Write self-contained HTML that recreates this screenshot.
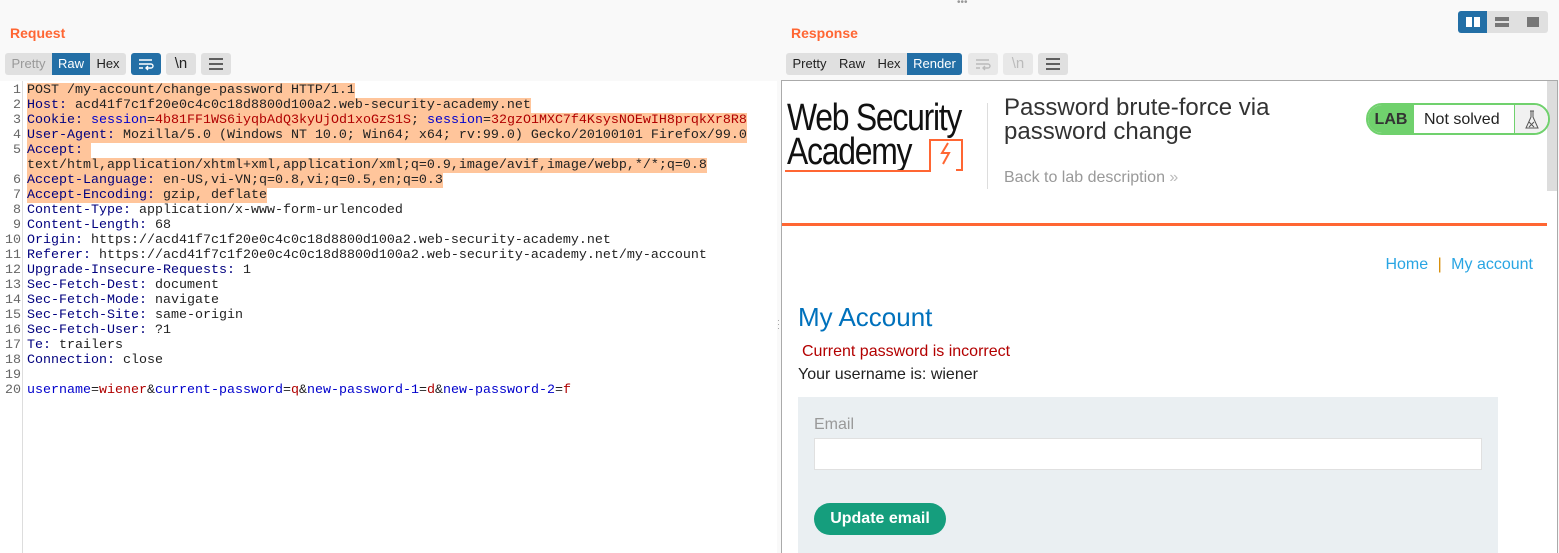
<!DOCTYPE html>
<html><head><meta charset="utf-8"><style>
*{margin:0;padding:0;box-sizing:border-box}
body{width:1559px;height:553px;background:#f9f9f9;position:relative;overflow:hidden;font-family:"Liberation Sans",sans-serif}
.a{position:absolute}
.title{color:#ff6633;font-weight:bold;font-size:14px}
.btn{position:absolute;height:22px;font-size:13px;line-height:22px;text-align:center;color:#222;background:#e0e0e0}
.code{position:absolute;left:0;top:81px;width:777px;height:472px;background:#fff}
.gut{position:absolute;left:0;top:0;width:23px;height:472px;border-right:1px solid #ddd;background:#fff}
.ln{position:absolute;left:0;width:21px;text-align:right;font:13.33px/15px "Liberation Mono",monospace;color:#666}
.l{position:absolute;left:27px;font:13.33px/15px "Liberation Mono",monospace;color:#222;white-space:pre}
.h{background:#ffc59b}
.k{color:#00007f}.r{color:#b00000}.b{color:#0000cc}
.logo{position:absolute;left:5px;font-size:38px;line-height:38px;letter-spacing:-1.5px;color:#111;transform-origin:0 0;white-space:nowrap}
</style></head><body>
<div class="a" style="left:957px;top:0;font-size:10px;color:#999;line-height:6px">•••</div>
<div class="a title" style="left:10px;top:25px">Request</div>
<div class="btn" style="left:5px;top:53px;width:47px;color:#999;border-radius:3px 0 0 3px">Pretty</div>
<div class="btn" style="left:52px;top:53px;width:38px;background:#236fa6;color:#fff">Raw</div>
<div class="btn" style="left:90px;top:53px;width:36px;border-radius:0 3px 3px 0">Hex</div>
<div class="btn" style="left:131px;top:53px;width:30px;background:#236fa6;border-radius:3px"><svg width="18" height="14" viewBox="0 0 18 14" style="margin-top:4px"><path d="M2 3h13M2 7h12a2 2 0 0 1 0 4H9M11 9l-2 2 2 2M2 11h4" stroke="#fff" stroke-width="1.4" fill="none"/></svg></div>
<div class="btn" style="left:166px;top:53px;width:30px;border-radius:3px;font-size:15px">\n</div>
<div class="btn" style="left:201px;top:53px;width:30px;border-radius:3px"><svg width="16" height="12" viewBox="0 0 16 12" style="margin-top:5px"><path d="M1 1h14M1 6h14M1 11h14" stroke="#333" stroke-width="1.4"/></svg></div>
<div class="code">
<div class="gut"></div>
<div class="ln" style="top:2px">1</div><div class="ln" style="top:17px">2</div><div class="ln" style="top:32px">3</div><div class="ln" style="top:47px">4</div><div class="ln" style="top:62px">5</div><div class="ln" style="top:92px">6</div><div class="ln" style="top:107px">7</div><div class="ln" style="top:122px">8</div><div class="ln" style="top:137px">9</div><div class="ln" style="top:152px">10</div><div class="ln" style="top:167px">11</div><div class="ln" style="top:182px">12</div><div class="ln" style="top:197px">13</div><div class="ln" style="top:212px">14</div><div class="ln" style="top:227px">15</div><div class="ln" style="top:242px">16</div><div class="ln" style="top:257px">17</div><div class="ln" style="top:272px">18</div><div class="ln" style="top:287px">19</div><div class="ln" style="top:302px">20</div>
<div class="l" style="top:2px"><span class="h">POST /my-account/change-password HTTP/1.1</span></div>
<div class="l" style="top:17px"><span class="h"><span class="k">Host:</span> acd41f7c1f20e0c4c0c18d8800d100a2.web-security-academy.net</span></div>
<div class="l" style="top:32px"><span class="h"><span class="k">Cookie:</span> <span class="b">session</span>=<span class="r">4b81FF1WS6iyqbAdQ3kyUjOd1xoGzS1S</span>; <span class="b">session</span>=<span class="r">32gzO1MXC7f4KsysNOEwIH8prqkXr8R8</span></span></div>
<div class="l" style="top:47px"><span class="h"><span class="k">User-Agent:</span> Mozilla/5.0 (Windows NT 10.0; Win64; x64; rv:99.0) Gecko/20100101 Firefox/99.0</span></div>
<div class="l" style="top:62px"><span class="h"><span class="k">Accept:</span> </span></div>
<div class="l" style="top:77px"><span class="h">text/html,application/xhtml+xml,application/xml;q=0.9,image/avif,image/webp,*/*;q=0.8</span></div>
<div class="l" style="top:92px"><span class="h"><span class="k">Accept-Language:</span> en-US,vi-VN;q=0.8,vi;q=0.5,en;q=0.3</span></div>
<div class="l" style="top:107px"><span class="h"><span class="k">Accept-Encoding:</span> gzip, deflate</span></div>
<div class="l" style="top:122px"><span class="k">Content-Type:</span> application/x-www-form-urlencoded</div>
<div class="l" style="top:137px"><span class="k">Content-Length:</span> 68</div>
<div class="l" style="top:152px"><span class="k">Origin:</span> https://acd41f7c1f20e0c4c0c18d8800d100a2.web-security-academy.net</div>
<div class="l" style="top:167px"><span class="k">Referer:</span> https://acd41f7c1f20e0c4c0c18d8800d100a2.web-security-academy.net/my-account</div>
<div class="l" style="top:182px"><span class="k">Upgrade-Insecure-Requests:</span> 1</div>
<div class="l" style="top:197px"><span class="k">Sec-Fetch-Dest:</span> document</div>
<div class="l" style="top:212px"><span class="k">Sec-Fetch-Mode:</span> navigate</div>
<div class="l" style="top:227px"><span class="k">Sec-Fetch-Site:</span> same-origin</div>
<div class="l" style="top:242px"><span class="k">Sec-Fetch-User:</span> ?1</div>
<div class="l" style="top:257px"><span class="k">Te:</span> trailers</div>
<div class="l" style="top:272px"><span class="k">Connection:</span> close</div>
<div class="l" style="top:302px"><span class="b">username</span>=<span class="r">wiener</span>&amp;<span class="b">current-password</span>=<span class="r">q</span>&amp;<span class="b">new-password-1</span>=<span class="r">d</span>&amp;<span class="b">new-password-2</span>=<span class="r">f</span></div>
</div>
<div class="a" style="left:777px;top:318px;font-size:9px;color:#999;line-height:4px">·<br>·<br>·</div>

<div class="a title" style="left:791px;top:25px">Response</div>
<div class="btn" style="left:1458px;top:11px;width:29px;background:#236fa6;border-radius:3px 0 0 3px"><svg width="14" height="10" style="margin-top:6px"><rect x="0" y="0" width="6" height="10" fill="#fff"/><rect x="8" y="0" width="6" height="10" fill="#fff"/></svg></div>
<div class="btn" style="left:1487px;top:11px;width:30px"><svg width="14" height="10" style="margin-top:6px"><rect x="0" y="0" width="14" height="4" fill="#777"/><rect x="0" y="6" width="14" height="4" fill="#777"/></svg></div>
<div class="btn" style="left:1517px;top:11px;width:31px;border-radius:0 3px 3px 0"><svg width="12" height="10" style="margin-top:6px"><rect width="12" height="10" fill="#777"/></svg></div>
<div class="btn" style="left:786px;top:53px;width:47px;border-radius:3px 0 0 3px">Pretty</div>
<div class="btn" style="left:833px;top:53px;width:38px">Raw</div>
<div class="btn" style="left:871px;top:53px;width:36px">Hex</div>
<div class="btn" style="left:907px;top:53px;width:55px;background:#236fa6;color:#fff;border-radius:0 3px 3px 0">Render</div>
<div class="btn" style="left:968px;top:53px;width:30px;border-radius:3px;background:#e8e8e8"><svg width="18" height="14" viewBox="0 0 18 14" style="margin-top:4px"><path d="M2 3h13M2 7h12a2 2 0 0 1 0 4H9M11 9l-2 2 2 2M2 11h4" stroke="#bbb" stroke-width="1.4" fill="none"/></svg></div>
<div class="btn" style="left:1003px;top:53px;width:30px;border-radius:3px;background:#e8e8e8;color:#bbb;font-size:15px">\n</div>
<div class="btn" style="left:1038px;top:53px;width:30px;border-radius:3px"><svg width="16" height="12" viewBox="0 0 16 12" style="margin-top:5px"><path d="M1 1h14M1 6h14M1 11h14" stroke="#333" stroke-width="1.4"/></svg></div>

<div class="a" style="left:781px;top:80px;width:777px;height:473px;background:#fff;border:1px solid #aaa;border-bottom:none;overflow:hidden">
 <div class="a" style="left:765px;top:0;width:10px;height:110px;background:#ddd"></div>
 <div class="logo" style="top:18px;transform:scaleX(0.84)">Web Security</div>
 <div class="logo" style="top:52px;transform:scaleX(0.84)">Academy</div>
 <svg class="a" style="left:0;top:55px" width="185" height="38"><path d="M3 35h145V4h32v30h-6" stroke="#ff6633" stroke-width="2" fill="none"/><path d="M166 7l-6 10h7l-6 11" stroke="#ff6633" stroke-width="2" fill="none"/></svg>
 <div class="a" style="left:205px;top:22px;width:1px;height:86px;background:#ddd"></div>
 <div class="a" style="left:222px;top:15px;font-size:24px;line-height:24px;color:#333">Password brute-force via<br>password change</div>
 <div class="a" style="left:222px;top:88px;font-size:16px;color:#999">Back to lab description <span style="color:#bbb">»</span></div>
 <div class="a" style="left:584px;top:22px;width:184px;height:32px;border:2px solid #70d16d;border-radius:16px;overflow:hidden;background:#fff">
  <div class="a" style="left:0;top:0;width:46px;height:30px;background:#70d16d;font-weight:bold;font-size:16px;line-height:30px;text-align:center;color:#333">LAB</div>
  <div class="a" style="left:56px;top:0;font-size:16px;line-height:30px;color:#222">Not solved</div>
  <div class="a" style="left:146px;top:0;width:38px;height:30px;border-left:1px solid #70d16d;background:#f1f1f1"><svg width="14" height="20" style="margin:5px 0 0 10px"><path d="M5 1h4M6 1v6L1 18h12L8 7V1M4 12l5 5M9 12l-5 5" stroke="#555" stroke-width="1" fill="none"/></svg></div>
 </div>
 <div class="a" style="left:0;top:142px;width:765px;height:3px;background:#ff6633"></div>
 <div class="a" style="right:24px;top:175px;font-size:16px;color:#29a5e3">Home <span style="color:#d68a00;margin:0 5px">|</span> My account</div>
 <div class="a" style="left:16px;top:221px;font-size:26px;color:#0071bc">My Account</div>
 <div class="a" style="left:20px;top:262px;font-size:16px;color:#b30000">Current password is incorrect</div>
 <div class="a" style="left:16px;top:285px;font-size:16px;color:#222">Your username is: wiener</div>
 <div class="a" style="left:16px;top:316px;width:700px;height:160px;background:#eaeff2">
  <div class="a" style="left:16px;top:19px;font-size:16px;color:#999">Email</div>
  <div class="a" style="left:16px;top:41px;width:668px;height:32px;background:#fff;border:1px solid #e0e0e0"></div>
  <div class="a" style="left:16px;top:106px;width:132px;height:32px;border-radius:16px;background:#159e7d;color:#fff;font-weight:bold;font-size:16px;line-height:32px;text-align:center">Update email</div>
 </div>
</div>
</body></html>
